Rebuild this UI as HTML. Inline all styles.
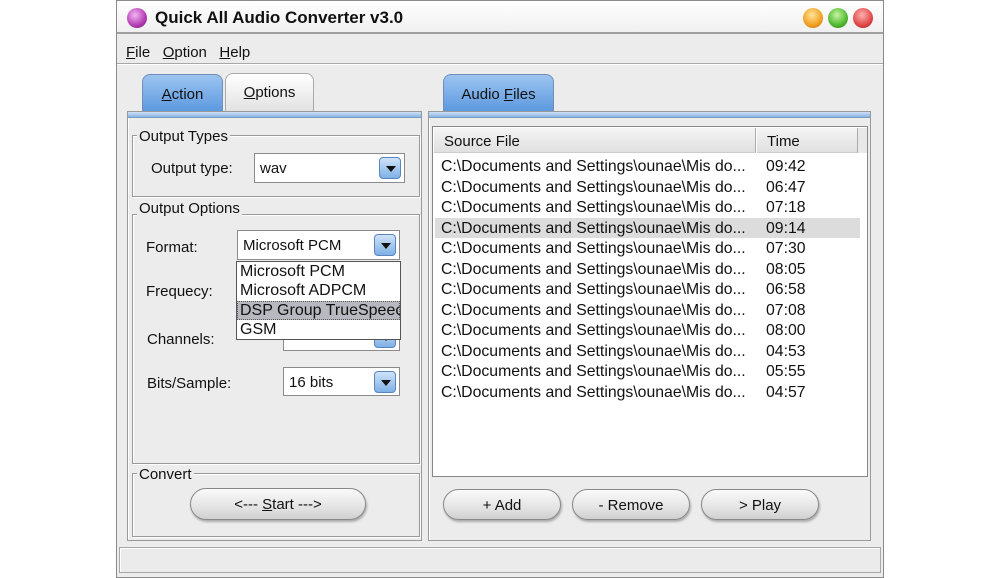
<!DOCTYPE html>
<html><head><style>
*{box-sizing:border-box;margin:0;padding:0}
body{width:1000px;height:578px;background:#fff;position:relative;overflow:hidden;font-family:"Liberation Sans",sans-serif;font-size:15px;color:#111}
.a{position:absolute}
.win{left:116px;top:0;width:768px;height:578px;background:#ececec;border:1px solid #8a8a8a}
.grp{border:1px solid #999;box-shadow:inset 1px 1px 0 #fff,1px 1px 0 #fff}
.lbl{background:#ececec;padding:0 2px;font-size:15px;line-height:16px}
.combo{background:#fff;border:1px solid #8a8a8a;padding-left:5px;line-height:30px}
.arr{position:absolute;right:3px;top:3px;width:22px;height:22px;border-radius:4px;background:linear-gradient(#cfe3fa,#7fb0e6);border:1px solid #5a86c0}
.arr:after{content:"";position:absolute;left:6px;top:8px;border-left:5px solid transparent;border-right:5px solid transparent;border-top:6px solid #111}
.btn{border:1px solid #888;border-radius:16px;background:linear-gradient(#fafafa,#e4e4e4 60%,#d0d0d0);box-shadow:1px 2px 2px #aaa;text-align:center;line-height:32px;font-size:15px}
.tab{border:1px solid #6f8fb8;border-bottom:none;border-radius:8px 8px 0 0;text-align:center;font-size:15px}
.row{position:absolute;left:441px;height:20px;line-height:22px;font-size:15.8px;width:420px}
.row b{font-weight:normal;position:absolute;left:325px}
.circ{width:20px;height:20px;border-radius:50%;top:8px}
</style></head><body>
<div class="a win"></div>
<div class="a" style="left:117px;top:1px;width:766px;height:33px;background:linear-gradient(#fff,#f0f0f0);border-bottom:2px solid #a0a0a0"></div>
<div class="a circ" style="left:127px;top:8px;background:radial-gradient(circle at 40% 35%,#f3b6f3,#b33bb3 60%,#6a1a6a)"></div>
<div class="a" style="left:155px;top:8px;font-weight:bold;font-size:17px">Quick All Audio Converter v3.0</div>
<div class="a circ" style="left:803px;background:radial-gradient(circle at 45% 35%,#ffe49a,#f0a020 60%,#c06010)"></div>
<div class="a circ" style="left:828px;background:radial-gradient(circle at 45% 35%,#c8f5a0,#50b830 60%,#2a7a10)"></div>
<div class="a circ" style="left:853px;background:radial-gradient(circle at 45% 35%,#ffb0b0,#e04848 60%,#a01818)"></div>
<div class="a" style="left:126px;top:44px;font-size:15px"><u>F</u>ile&nbsp;&nbsp; <u>O</u>ption&nbsp;&nbsp; <u>H</u>elp</div>
<div class="a" style="left:117px;top:63px;width:766px;height:2px;border-top:1px solid #a8a8a8;border-bottom:1px solid #fff"></div>
<div class="a tab" style="left:142px;top:74px;width:81px;height:38px;background:linear-gradient(#9cc4f0,#5b98df);line-height:40px"><u>A</u>ction</div>
<div class="a tab" style="left:225px;top:73px;width:89px;height:38px;border-color:#aaa;background:linear-gradient(#fff,#e2e2e2);line-height:38px"><u>O</u>ptions</div>
<div class="a" style="left:127px;top:111px;width:295px;height:430px;border:1px solid #999;box-shadow:inset 1px 1px 0 #fff"></div>
<div class="a" style="left:128px;top:112px;width:293px;height:6px;background:linear-gradient(#cfe0f4,#8ab4e4);border-bottom:1px solid #7a9cc4"></div>
<div class="a grp" style="left:132px;top:135px;width:288px;height:62px"></div>
<div class="a lbl" style="left:137px;top:129px">Output Types</div>
<div class="a" style="left:151px;top:160px">Output type:</div>
<div class="a combo" style="left:254px;top:153px;width:151px;height:30px">wav<div class="arr"></div></div>
<div class="a grp" style="left:132px;top:214px;width:288px;height:250px"></div>
<div class="a lbl" style="left:137px;top:201px">Output Options</div>
<div class="a" style="left:146px;top:239px">Format:</div>
<div class="a" style="left:146px;top:283px">Frequecy:</div>
<div class="a" style="left:147px;top:331px">Channels:</div>
<div class="a" style="left:147px;top:375px">Bits/Sample:</div>
<div class="a combo" style="left:283px;top:322px;width:117px;height:29px"><div class="arr"></div></div>
<div class="a combo" style="left:283px;top:367px;width:117px;height:29px">16 bits<div class="arr"></div></div>
<div class="a combo" style="left:237px;top:230px;width:163px;height:30px">Microsoft PCM<div class="arr"></div></div>
<div class="a" style="left:236px;top:261px;width:165px;height:79px;background:#fff;border:1px solid #555;overflow:hidden;font-size:16px;line-height:19.3px;white-space:nowrap">
<div style="padding-left:3px">Microsoft PCM</div>
<div style="padding-left:3px">Microsoft ADPCM</div>
<div style="padding-left:3px;background:#b8b8c0;outline:1px dotted #555;outline-offset:-1px">DSP Group TrueSpeech</div>
<div style="padding-left:3px">GSM</div></div>
<div class="a grp" style="left:132px;top:473px;width:288px;height:64px"></div>
<div class="a lbl" style="left:137px;top:467px">Convert</div>
<div class="a btn" style="left:190px;top:488px;width:176px;height:32px">&lt;--- <u>S</u>tart ---&gt;</div>
<div class="a tab" style="left:443px;top:74px;width:111px;height:38px;background:linear-gradient(#9cc4f0,#5b98df);line-height:40px">Audio <u>F</u>iles</div>
<div class="a" style="left:428px;top:111px;width:443px;height:430px;border:1px solid #999;box-shadow:inset 1px 1px 0 #fff"></div>
<div class="a" style="left:429px;top:112px;width:441px;height:6px;background:linear-gradient(#cfe0f4,#8ab4e4);border-bottom:1px solid #7a9cc4"></div>
<div class="a" style="left:432px;top:126px;width:436px;height:351px;background:#fff;border:1px solid #888"></div>
<div class="a" style="left:434px;top:128px;width:322px;height:25px;background:linear-gradient(#f4f4f4,#e0e0e0);border-right:1px solid #aaa;border-bottom:1px solid #ccc;padding-left:10px;line-height:28px">Source File</div>
<div class="a" style="left:757px;top:128px;width:101px;height:25px;background:linear-gradient(#f4f4f4,#e0e0e0);border-right:1px solid #aaa;border-bottom:1px solid #ccc;padding-left:10px;line-height:28px">Time</div>
<div class="a" style="left:858px;top:128px;width:9px;height:25px;background:#e8e8e8"></div>
<div class="a" style="left:435px;top:218px;width:425px;height:20px;background:#dcdcdc"></div>
<div class="row" style="top:156px">C:\Documents and Settings\ounae\Mis do...<b>09:42</b></div>
<div class="row" style="top:176.5px">C:\Documents and Settings\ounae\Mis do...<b>06:47</b></div>
<div class="row" style="top:197px">C:\Documents and Settings\ounae\Mis do...<b>07:18</b></div>
<div class="row" style="top:217.5px">C:\Documents and Settings\ounae\Mis do...<b>09:14</b></div>
<div class="row" style="top:238px">C:\Documents and Settings\ounae\Mis do...<b>07:30</b></div>
<div class="row" style="top:258.5px">C:\Documents and Settings\ounae\Mis do...<b>08:05</b></div>
<div class="row" style="top:279px">C:\Documents and Settings\ounae\Mis do...<b>06:58</b></div>
<div class="row" style="top:299.5px">C:\Documents and Settings\ounae\Mis do...<b>07:08</b></div>
<div class="row" style="top:320px">C:\Documents and Settings\ounae\Mis do...<b>08:00</b></div>
<div class="row" style="top:340.5px">C:\Documents and Settings\ounae\Mis do...<b>04:53</b></div>
<div class="row" style="top:361px">C:\Documents and Settings\ounae\Mis do...<b>05:55</b></div>
<div class="row" style="top:381.5px">C:\Documents and Settings\ounae\Mis do...<b>04:57</b></div>
<div class="a btn" style="left:443px;top:489px;width:118px;height:31px">+ Add</div>
<div class="a btn" style="left:572px;top:489px;width:118px;height:31px">- Remove</div>
<div class="a btn" style="left:701px;top:489px;width:118px;height:31px">&gt; Play</div>
<div class="a" style="left:119px;top:547px;width:762px;height:26px;border:1px solid #a8a8a8;box-shadow:inset 1px 1px 0 #fff;background:#ebebeb"></div>
</body></html>
